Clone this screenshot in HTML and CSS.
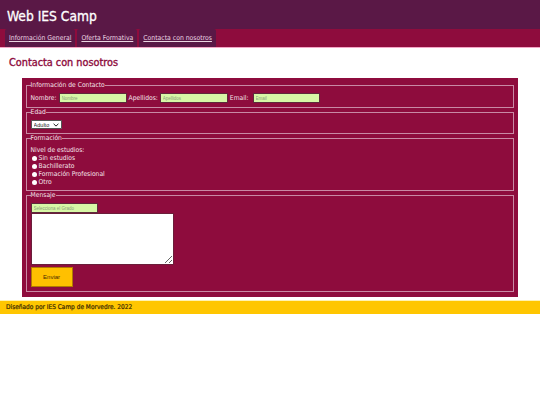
FILE: index.html
```html
<!DOCTYPE html>
<html lang="es">
<head>
<meta charset="utf-8">
<title>Web IES Camp</title>
<link rel="stylesheet" href="styles.css">
</head>
<body>
<header class="site-header">
  <h1 class="site-title">Web IES Camp</h1>
</header>
<nav class="main-nav">
  <a class="nav-tab" href="#">Información General</a>
  <a class="nav-tab" href="#">Oferta Formativa</a>
  <a class="nav-tab" href="#">Contacta con nosotros</a>
</nav>
<main class="content">
  <h2 class="page-title">Contacta con nosotros</h2>
  <form class="contact-form">
    <fieldset class="group">
      <legend>Información de Contacto</legend>
      <div class="row">
        <label class="lbl">Nombre:</label><input class="field" type="text" placeholder="Nombre">
        <label class="lbl">Apellidos:</label><input class="field" type="text" placeholder="Apellidos">
        <label class="lbl">Email:</label><input class="field email" type="text" placeholder="Email">
      </div>
    </fieldset>
    <fieldset class="group">
      <legend>Edad</legend>
      <div class="select-wrap">
        <select class="age">
          <option>Adulto</option>
        </select>
        <svg class="chev" width="6" height="4" viewBox="0 0 6 4"><path d="M0.6 0.8 L3 3.1 L5.4 0.8" fill="none" stroke="#222" stroke-width="1"/></svg>
      </div>
    </fieldset>
    <fieldset class="group">
      <legend>Formación</legend>
      <div class="radios">
        <span class="radios-title">Nivel de estudios:</span>
        <label class="radio"><span class="dot"></span>Sin estudios</label>
        <label class="radio"><span class="dot"></span>Bachillerato</label>
        <label class="radio"><span class="dot"></span>Formación Profesional</label>
        <label class="radio"><span class="dot"></span>Otro</label>
      </div>
    </fieldset>
    <fieldset class="group">
      <legend>Mensaje</legend>
      <div class="msg">
        <input class="field grade" type="text" placeholder="Selecciona el Grado">
        <textarea class="text"></textarea>
        <button class="send" type="button">Enviar</button>
      </div>
    </fieldset>
  </form>
</main>
<footer class="site-footer">Diseñado por IES Camp de Morvedre. 2022</footer>
</body>
</html>
```
FILE: styles.css
```css
* { box-sizing: border-box; }
body {
  margin: 0;
  font-family: "DejaVu Sans Condensed", "DejaVu Sans", sans-serif;
  background: #ffffff;
  color: #222;
}
.site-header {
  background: #5a1846;
  height: 29px;
  padding: 8px 7px 0;
}
.site-title {
  margin: 0;
  font-size: 13.7px;
  font-weight: normal;
  color: #ffffff;
  line-height: 16px;
  -webkit-text-stroke: 0.3px #ffffff;
}
.main-nav {
  background: #8e0c3d;
  height: 19px;
  border-bottom: 1px solid #f4a6c6;
  display: flex;
  gap: 2px;
  padding-left: 5px;
}
.nav-tab {
  background: #5a1846;
  color: #ecd6e2;
  font-size: 6.8px;
  line-height: 17px;
  height: 18px;
  padding: 1px 4px 0;
  border-radius: 2px 2px 0 0;
}
.content {
  padding-top: 8px;
}
.page-title {
  margin: 0 0 8px 9px;
  font-size: 10.8px;
  line-height: 14px;
  color: #8e0c3d;
  font-weight: normal;
  -webkit-text-stroke: 0.35px #8e0c3d;
}
.contact-form {
  width: 92%;
  margin: 0 auto 3px;
  background: #8e0c3d;
  padding: 3px 4px 5px;
  color: #f4e3ea;
  font-size: 6.7px;
}
.group {
  border: 1px solid #c98aa5;
  margin: 0;
  padding: 0 4px 3px;
}
.group legend {
  padding: 0;
  font-size: 6.7px;
  line-height: 8px;
  color: #f4e3ea;
}
.row {
  display: flex;
  align-items: center;
  gap: 2px;
  padding: 4px 0 1px;
}
.field {
  background: #d7f7a6;
  border: 1px solid #5e2a3c;
  height: 10px;
  width: 68px;
  font-family: "Liberation Sans", sans-serif;
  font-size: 4.5px;
  padding: 0 2px;
  margin: 0;
}
.field.email { margin-left: 2px; width: 67px; }
.field::placeholder { color: #8aa27a; }
.select-wrap {
  position: relative;
  width: 31px;
  height: 9px;
  margin: 4px 0 1px;
}
.age {
  appearance: none;
  -webkit-appearance: none;
  font-family: "Liberation Sans", sans-serif;
  font-size: 5.5px;
  height: 9px;
  width: 31px;
  padding: 0 0 0 2px;
  margin: 0;
  border: 1px solid #555;
  border-radius: 1px;
  background: #fff;
  color: #222;
  display: block;
}
.chev {
  position: absolute;
  right: 3px;
  top: 3px;
}
.radios {
  display: flex;
  flex-direction: column;
  line-height: 8px;
  padding: 4px 0 1px;
}
.radio {
  display: flex;
  align-items: center;
}
.dot {
  width: 5px;
  height: 5px;
  border-radius: 50%;
  background: #fff;
  margin: 0 2px 0 1px;
}
.msg {
  display: flex;
  flex-direction: column;
  align-items: flex-start;
  padding: 4px 0 1px;
}
.grade { width: 67px; height: 10px; margin: 0; }
.text {
  width: 143px;
  height: 52px;
  border: 1px solid #6b1e3a;
  background: #fff;
  resize: both;
  margin: 0;
  padding: 0;
  display: block;
}
.send {
  margin-top: 2px;
  width: 42px;
  height: 20px;
  background: #ffc000;
  border: 1px solid #b07a00;
  color: #4a2a00;
  font-family: "Liberation Sans", sans-serif;
  font-size: 6px;
  padding: 0;
}
.site-footer {
  background: #ffc600;
  border-top: 1px solid #fff2b0;
  height: 14px;
  line-height: 13px;
  padding-left: 6px;
  font-size: 6.5px;
  color: #3a2a00;
  -webkit-text-stroke: 0.2px #3a2a00;
}
```
